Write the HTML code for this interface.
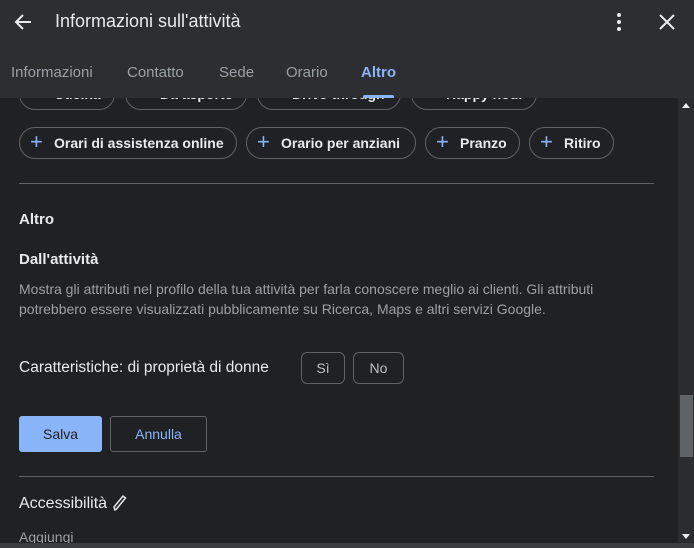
<!DOCTYPE html>
<html><head><meta charset="utf-8"><style>
*{box-sizing:border-box;margin:0;padding:0}
body{width:694px;height:548px;overflow:hidden;background:#202124;font-family:"Liberation Sans",Arial,sans-serif;color:#e8eaed;position:relative}
.hdr{position:absolute;left:0;top:0;width:694px;height:98px;background:#2d2e31;z-index:5}
.title{position:absolute;left:55px;top:11px;font-size:18px;color:#e8eaed}
.tab{position:absolute;top:64px;font-size:15px;color:#9aa0a6}
.chip{position:absolute;height:32px;border:1px solid #5f6368;border-radius:16px;font-size:14px;font-weight:bold;color:#e8eaed;padding-left:34px;line-height:30px}
.chip:before{content:"+";position:absolute;left:10px;top:-1px;font-size:22px;font-weight:normal;color:#8ab4f8}
.hr{position:absolute;left:19px;width:635px;height:1px;background:#5f6368}
.t{position:absolute;left:19px}
.sb{position:absolute;right:0;top:98px;width:16px;height:445px;background:#2b2c2f}
</style></head><body>
<div class="hdr">
<svg style="position:absolute;left:13px;top:12px" width="20" height="20" viewBox="0 0 20 20"><path d="M18 10H3M10 3L3 10l7 7" stroke="#e8eaed" stroke-width="2" fill="none"/></svg>
<div class="title">Informazioni sull'attività</div>
<svg style="position:absolute;left:614px;top:12px" width="10" height="20"><circle cx="5" cy="3" r="2" fill="#e8eaed"/><circle cx="5" cy="10" r="2" fill="#e8eaed"/><circle cx="5" cy="17" r="2" fill="#e8eaed"/></svg>
<svg style="position:absolute;left:659px;top:14px" width="16" height="16"><path d="M1 1L15 15M15 1L1 15" stroke="#e8eaed" stroke-width="2"/></svg>
<div class="tab" style="left:11px">Informazioni</div>
<div class="tab" style="left:127px">Contatto</div>
<div class="tab" style="left:219px">Sede</div>
<div class="tab" style="left:286px">Orario</div>
<div class="tab" style="left:361px;color:#8ab4f8;font-weight:bold">Altro</div>
<div style="position:absolute;left:363px;top:95px;width:31px;height:3px;background:#8ab4f8;border-radius:2px 2px 0 0"></div>
</div>
<div class="chip" style="left:19px;top:78px;width:96px">Cucina</div>
<div class="chip" style="left:125px;top:78px;width:122px">Da asporto</div>
<div class="chip" style="left:257px;top:78px;width:144px">Drive-through</div>
<div class="chip" style="left:411px;top:78px;width:126px">Happy hour</div>
<div class="chip" style="left:19px;top:127px;width:218px">Orari di assistenza online</div>
<div class="chip" style="left:246px;top:127px;width:170px">Orario per anziani</div>
<div class="chip" style="left:425px;top:127px;width:95px">Pranzo</div>
<div class="chip" style="left:529px;top:127px;width:85px">Ritiro</div>
<div class="hr" style="top:183px"></div>
<div class="t" style="top:211px;font-size:15px;font-weight:bold">Altro</div>
<div class="t" style="top:251px;font-size:15px;font-weight:bold">Dall'attività</div>
<div class="t" style="top:279px;font-size:14px;color:#9aa0a6;line-height:20px;width:640px">Mostra gli attributi nel profilo della tua attività per farla conoscere meglio ai clienti. Gli attributi potrebbero essere visualizzati pubblicamente su Ricerca, Maps e altri servizi Google.</div>
<div class="t" style="top:359px;font-size:15.5px">Caratteristiche: di proprietà di donne</div>
<div style="position:absolute;left:301px;top:352px;width:44px;height:32px;border:1px solid #5f6368;border-radius:6px;font-size:14px;color:#bdc1c6;text-align:center;line-height:30px">Sì</div>
<div style="position:absolute;left:353px;top:352px;width:51px;height:32px;border:1px solid #5f6368;border-radius:6px;font-size:14px;color:#bdc1c6;text-align:center;line-height:30px">No</div>
<div style="position:absolute;left:19px;top:416px;width:83px;height:36px;background:#8ab4f8;border-radius:3px;font-size:14px;color:#202124;text-align:center;line-height:36px">Salva</div>
<div style="position:absolute;left:110px;top:416px;width:97px;height:36px;border:1px solid #5f6368;border-radius:3px;font-size:14px;color:#8ab4f8;text-align:center;line-height:34px">Annulla</div>
<div class="hr" style="top:476px"></div>
<div class="t" style="top:495px;font-size:16px">Accessibilità</div>
<svg style="position:absolute;left:112px;top:494px" width="16" height="18" viewBox="0 0 16 18"><path d="M3 16L2 13 11 2 13.5 4 4.5 15Z" stroke="#e8eaed" stroke-width="1.5" fill="none"/></svg>
<div class="t" style="top:529px;font-size:14px;color:#9aa0a6">Aggiungi</div>
<div class="sb"><div style="position:absolute;left:2px;top:297px;width:13px;height:62px;background:#5f6368"></div>
<div style="position:absolute;left:4px;top:5px;border:4px solid transparent;border-bottom:5px solid #e8eaed;border-top:0"></div>
<div style="position:absolute;left:4px;bottom:4px;border:4px solid transparent;border-top:5px solid #e8eaed;border-bottom:0"></div></div>
<div style="position:absolute;left:0;top:543px;width:694px;height:5px;background:#3c3d40"></div>
</body></html>
